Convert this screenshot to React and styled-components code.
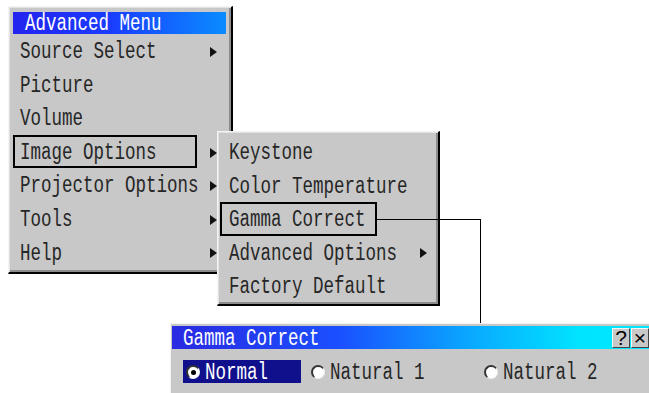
import React from "react";
import styled, { createGlobalStyle } from "styled-components";

const GlobalStyle = createGlobalStyle`
  body {
    margin: 0;
    background: #ffffff;
  }
`;

const Desktop = styled.div`
  position: relative;
  width: 649px;
  height: 393px;
  overflow: hidden;
  background: #ffffff;
  font-family: "Liberation Mono", "DejaVu Sans Mono", monospace;
`;

const MenuWindow = styled.div`
  position: absolute;
  left: ${(p) => p.$x}px;
  top: ${(p) => p.$y}px;
  width: ${(p) => p.$w}px;
  box-sizing: border-box;
  display: flex;
  flex-direction: column;
  padding: ${(p) => p.$pad};
  background: #c8c8c8;
  border-style: solid;
  border-width: 1px 2px 2px 1px;
  border-color: #f4f4f4 #000 #000 #f4f4f4;
  box-shadow: inset 1px 1px 0 #e2e2e2, inset -2px -2px 0 #8c8c8c;
  z-index: ${(p) => p.$z};
`;

const TitleBar = styled.div`
  display: flex;
  align-items: center;
  height: ${(p) => p.$h}px;
  padding-left: ${(p) => p.$indent}px;
  background: ${(p) => p.$bg};
  color: #ffffff;
  font-size: 17.5px;
`;

const Text = styled.span`
  display: inline-block;
  transform: translateY(1.5px) scaleY(1.32);
  white-space: pre;
  line-height: 1;
`;

const Row = styled.div`
  display: flex;
  align-items: center;
  height: ${(p) => p.$h}px;
`;

const Label = styled.div`
  box-sizing: border-box;
  height: 100%;
  display: flex;
  align-items: center;
  width: ${(p) => (p.$w ? `${p.$w}px` : "auto")};
  padding-left: ${(p) => p.$indent}px;
  border: 2px solid ${(p) => (p.$boxed ? "#000" : "transparent")};
  font-size: 17.5px;
  color: #262626;
`;

const Arrow = styled.span`
  width: 0;
  height: 0;
  margin-left: ${(p) => p.$gap}px;
  margin-top: 2px;
  border-left: 7px solid #111;
  border-top: 5.5px solid transparent;
  border-bottom: 5.5px solid transparent;
`;

const Dialog = styled.div`
  position: absolute;
  left: 170px;
  top: 323px;
  width: 482px;
  height: 80px;
  box-sizing: border-box;
  padding: 2px 0 0 1px;
  background: #c8c8c8;
  border-top: 1px solid #f4f4f4;
  border-left: 1px solid #f4f4f4;
  z-index: 3;
`;

const TitleButtons = styled.div`
  display: flex;
  gap: 1px;
  margin-left: auto;
  margin-right: 3px;
`;

const TitleButton = styled.div`
  box-sizing: border-box;
  width: 18px;
  height: 20px;
  display: flex;
  align-items: center;
  justify-content: center;
  background: #c8c8c8;
  border-style: solid;
  border-width: 1px;
  border-color: #f4f4f4 #444 #444 #f4f4f4;
  color: #000;
  font-family: "Liberation Sans", sans-serif;
  font-size: 21px;
  line-height: 1;
`;

const OptionsRow = styled.div`
  display: flex;
  padding: 11px 0 0 11px;
`;

const Option = styled.div`
  box-sizing: border-box;
  display: flex;
  align-items: center;
  gap: 5px;
  width: ${(p) => (p.$w ? `${p.$w}px` : "auto")};
  height: 23px;
  padding-left: 3px;
  margin-right: ${(p) => p.$gap || 0}px;
  background: ${(p) => (p.$selected ? "#10108c" : "transparent")};
  color: ${(p) => (p.$selected ? "#ffffff" : "#262626")};
  font-size: 17.5px;
`;

const Radio = styled.span`
  box-sizing: border-box;
  width: 14px;
  height: 14px;
  border-radius: 50%;
  background: #ffffff;
  border-style: solid;
  border-width: 2px 1px 1px 2px;
  border-color: #333 #f0f0f0 #f0f0f0 #333;
  display: flex;
  align-items: center;
  justify-content: center;

  &::after {
    content: "";
    display: ${(p) => (p.$checked ? "block" : "none")};
    width: 5px;
    height: 5px;
    border-radius: 50%;
    background: #000;
  }
`;

const Connector = styled.div`
  position: absolute;
  left: 377px;
  top: 219px;
  width: 104px;
  height: 104px;
  box-sizing: border-box;
  border-top: 1px solid #000;
  border-right: 1px solid #000;
  z-index: 4;
`;

const mainItems = [
  { label: "Source Select", arrow: true },
  { label: "Picture" },
  { label: "Volume" },
  { label: "Image Options", arrow: true, boxed: true },
  { label: "Projector Options", arrow: true },
  { label: "Tools", arrow: true },
  { label: "Help", arrow: true },
];

const subItems = [
  { label: "Keystone" },
  { label: "Color Temperature" },
  { label: "Gamma Correct", boxed: true },
  { label: "Advanced Options", arrow: true },
  { label: "Factory Default" },
];

export default function App() {
  return (
    <>
      <GlobalStyle />
      <Desktop>
        <MenuWindow $x={8} $y={6} $w={225} $pad="5px 5px 3px 4px" $z={1}>
          <TitleBar
            $h={22}
            $indent={12}
            $bg="linear-gradient(90deg, #2424ee 0%, #1a3cff 45%, #0a8cff 100%)"
          >
            <Text>Advanced Menu</Text>
          </TitleBar>
          {mainItems.map((item) => (
            <Row key={item.label} $h={33.6}>
              <Label $w={184} $indent={5} $boxed={item.boxed}>
                <Text>{item.label}</Text>
              </Label>
              {item.arrow && <Arrow $gap={13} />}
            </Row>
          ))}
        </MenuWindow>

        <MenuWindow $x={217} $y={131} $w={223} $pad="3px 4px 1px 2px" $z={2}>
          {subItems.map((item) => (
            <Row key={item.label} $h={33.5}>
              <Label $w={item.boxed ? 157 : 0} $indent={7} $boxed={item.boxed}>
                <Text>{item.label}</Text>
              </Label>
              {item.arrow && <Arrow $gap={21} />}
            </Row>
          ))}
        </MenuWindow>

        <Connector />

        <Dialog>
          <TitleBar
            $h={23}
            $indent={11}
            $bg="linear-gradient(90deg, #2a2ae2 0%, #1a50ff 35%, #0aa8ff 62%, #00e4ff 85%, #00e8ff 100%)"
          >
            <Text>Gamma Correct</Text>
            <TitleButtons>
              <TitleButton>?</TitleButton>
              <TitleButton>×</TitleButton>
            </TitleButtons>
          </TitleBar>
          <OptionsRow>
            <Option $selected $w={118} $gap={7}>
              <Radio $checked />
              <Text>Normal</Text>
            </Option>
            <Option $w={173}>
              <Radio />
              <Text>Natural 1</Text>
            </Option>
            <Option>
              <Radio />
              <Text>Natural 2</Text>
            </Option>
          </OptionsRow>
        </Dialog>
      </Desktop>
    </>
  );
}
